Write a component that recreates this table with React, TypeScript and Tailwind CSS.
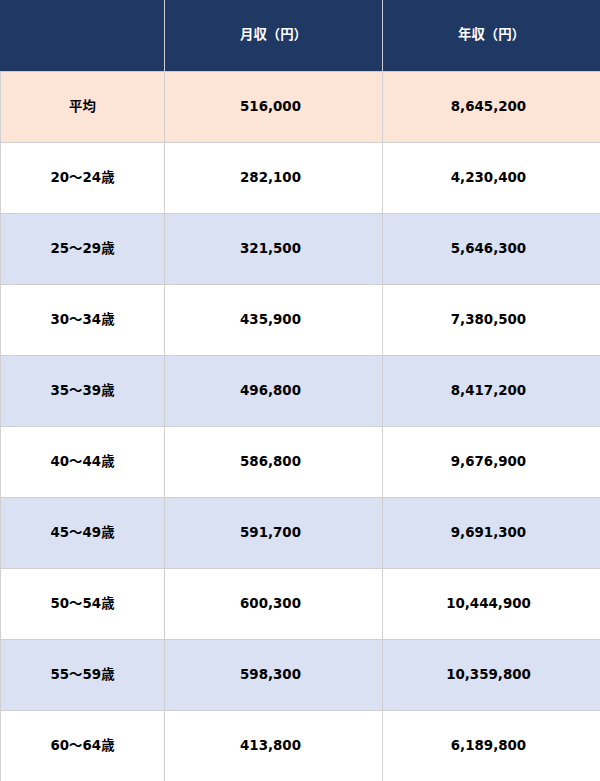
const ROWS: { label: string; monthly: string; annual: string }[] = [
  { label: "平均", monthly: "516,000", annual: "8,645,200" },
  { label: "20～24歳", monthly: "282,100", annual: "4,230,400" },
  { label: "25～29歳", monthly: "321,500", annual: "5,646,300" },
  { label: "30～34歳", monthly: "435,900", annual: "7,380,500" },
  { label: "35～39歳", monthly: "496,800", annual: "8,417,200" },
  { label: "40～44歳", monthly: "586,800", annual: "9,676,900" },
  { label: "45～49歳", monthly: "591,700", annual: "9,691,300" },
  { label: "50～54歳", monthly: "600,300", annual: "10,444,900" },
  { label: "55～59歳", monthly: "598,300", annual: "10,359,800" },
  { label: "60～64歳", monthly: "413,800", annual: "6,189,800" },
];

function rowBg(i: number) {
  if (i === 0) return "bg-[#fce4d6]";
  return i % 2 === 0 ? "bg-[#d9e1f2]" : "bg-white";
}

export default function App() {
  return (
    <div
      className="w-[600px] text-[13.4px] font-bold text-black"
      style={{ fontFamily: '"DejaVu Sans", "Noto Sans CJK JP", sans-serif' }}
    >
      <table className="w-full table-fixed border-collapse">
        <colgroup>
          <col className="w-[164px]" />
          <col className="w-[218px]" />
          <col className="w-[218px]" />
        </colgroup>
        <thead>
          <tr className="h-[71px] bg-[#203864] text-white">
            <th className="border border-[#c9ccd4] border-t-[#203864] border-l-[#203864]" />
            <th className="border border-[#c9ccd4] border-t-[#203864] pb-[2px]">月収（円）</th>
            <th className="border border-[#c9ccd4] border-t-[#203864] border-r-[#203864] pb-[2px]">年収（円）</th>
          </tr>
        </thead>
        <tbody>
          {ROWS.map((r, i) => (
            <tr key={r.label} className={`h-[71px] ${rowBg(i)}`}>
              <td className="border border-[#d0d0d0] text-center">{r.label}</td>
              <td className="border border-[#d0d0d0] pr-[6px] text-center">{r.monthly}</td>
              <td className="border border-[#d0d0d0] pr-[6px] text-center">{r.annual}</td>
            </tr>
          ))}
        </tbody>
      </table>
    </div>
  );
}
